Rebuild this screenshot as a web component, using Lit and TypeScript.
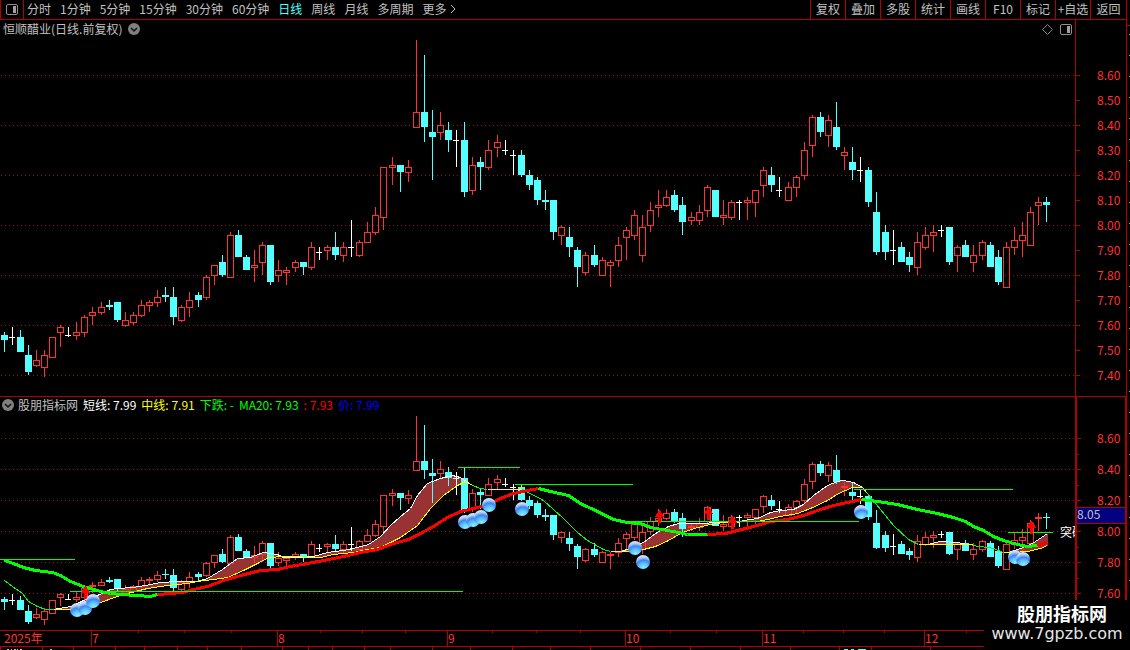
import { LitElement, html, svg, css } from "lit";
import { customElement, state } from "lit/decorators.js";
import { classMap } from "lit/directives/class-map.js";

type Kind = "r" | "c" | "w";
type Candle = { kind: Kind; high: number; top: number; bottom: number; low: number };

/* One candle per entry: kind, high, body top, body bottom, low (in cents). */
const CANDLES: Candle[] = `
c 757 756 754 749|w 759 755 755 752|c 758 755 749 749|c 752 748 741 740|r 750 746 744 743|r 750 748 743 739
r 755 755 747 747|r 760 759 757 751|w 759 756 756 755|r 761 757 756 754|r 764 763 757 755|r 767 765 764 760
r 769 767 765 764|c 770 768 767 766|c 769 769 762 761|r 765 762 760 759|r 765 764 761 760|r 770 768 764 763
r 770 769 768 765|r 774 771 769 767|c 775 772 771 769|c 775 771 763 760|r 768 767 762 761|r 773 770 767 763
c 773 772 770 767|r 780 779 771 770|r 784 784 780 776|c 788 785 780 779|r 797 796 779 779|c 798 796 787 787
c 788 787 782 782|r 790 784 783 777|r 793 792 785 780|c 792 792 777 776|r 786 782 780 777|r 783 782 781 776
r 786 785 783 781|c 785 785 783 780|r 793 791 783 782|w 791 789 789 786|r 792 791 790 786|c 797 791 788 786
r 793 791 788 785|w 802 791 791 787|r 794 793 788 787|r 801 797 793 793|r 807 804 797 796|r 823 823 803 798
r 827 824 823 816|c 824 824 821 813|r 826 823 821 817|r 874 845 839 839|c 868 845 839 833|c 846 837 835 818
r 845 840 837 834|c 841 838 834 829|w 838 834 834 823|c 841 834 813 811|r 827 824 814 812|c 827 825 823 814
r 834 830 823 822|r 836 833 831 827|w 834 830 830 828|w 830 828 828 820|c 830 828 820 819|c 822 820 816 814
c 819 818 810 808|c 814 810 809 806|c 810 810 797 794|r 800 799 796 792|c 799 795 791 787|c 791 790 783 775
r 789 788 781 780|c 792 788 784 783|r 787 786 780 780|r 786 785 784 775|r 795 792 786 783|r 799 798 795 786
r 806 804 796 794|r 804 799 788 785|r 809 806 800 797|r 814 808 807 803|r 814 811 808 807|c 814 812 806 805
c 811 808 801 796|r 805 803 802 800|r 808 805 802 800|r 816 815 806 803|c 814 814 803 803|r 810 804 803 800
r 810 809 803 802|w 810 809 809 802|r 811 810 809 802|r 814 814 809 803|r 823 822 816 811|c 823 820 816 813
w 819 814 814 811|r 817 815 810 810|r 820 819 815 811|r 833 830 820 818|r 844 843 832 827|c 845 843 837 835
r 844 842 836 831|c 849 839 831 830|r 831 829 828 822|c 831 825 822 818|w 827 822 822 817|c 823 822 809 807
c 813 805 789 788|c 800 797 789 786|w 798 790 790 784|c 793 791 785 785|c 789 787 784 781|r 797 793 783 780
r 799 796 791 790|r 800 797 796 789|w 800 798 798 795|c 799 799 785 784|r 792 791 788 781|c 794 792 787 787
r 792 788 785 781|r 794 793 788 786|c 793 792 783 783|c 790 787 777 776|r 793 791 775 775|r 799 794 791 788
r 801 796 794 787|r 807 805 792 792|r 811 809 808 800|c 811 809 808 801`
  .trim()
  .split(/[|\n]/)
  .map((row) => {
    const [kind, ...v] = row.trim().split(" ");
    const [high, top, bottom, low] = v.map(Number);
    return { kind: kind as Kind, high, top, bottom, low };
  });

/* Study lines are stored in plot units, where the plot is BASE wide. */
const BASE = 1075;

const TREND = [
  { tone: "up", pts: "4,560 13,563 23,567 35,570 52,572 60,575 70,581 83,586 100,591 110,593 120,594 137,595 150,596 157,594" },
  { tone: "down", pts: "157,594 182,592 193,589 207,586 223,580 240,575 260,570 277,569 290,566 307,563 323,560 343,556 360,552 377,549 393,543 408,539 420,533 433,526 447,517 460,511 477,507 487,504 500,498 513,493 527,490 538,488" },
  { tone: "up", pts: "538,488 550,491 568,495 580,503 597,511 613,519 627,522 640,523 650,527 667,530 678,532 687,534 707,534" },
  { tone: "down", pts: "707,534 725,533 737,530 753,526 770,521 787,519 803,515 817,510 833,505 847,502 861,499" },
  { tone: "up", pts: "861,499 877,501 897,504 917,509 937,513 953,517 965,521 973,526 983,530 993,536 1003,540 1017,544 1027,546 1037,545" },
  { tone: "down", pts: "1037,545 1047,542" },
];

const BANDS = [
  {
    short: "53,609 70,606 77,603 83,600 97,595 110,589 117,588 133,587 150,584 160,582 177,581 197,581 207,578 222,569 237,558 250,557 263,552 277,554 283,557 300,557 313,556 327,552 343,550 357,547 368,544 380,536 390,525 400,516 410,508 417,495 427,483 440,478 452,475 460,477 472,485",
    mid: "53,609 70,609 80,606 100,602 117,596 127,593 147,588 167,585 187,583 197,581 213,579 227,577 243,570 257,563 268,557 283,556 320,557 333,554 353,552 367,549 380,547 390,542 400,537 417,525 430,508 443,495 457,485 465,481 472,485",
  },
  {
    short: "620,551 630,548 643,542 655,533 668,526 678,523 700,523 717,522 737,522 743,520 757,518 770,512 780,510 793,509 803,504 813,495 827,485 837,481 843,480 853,482 862,487 867,493",
    mid: "610,551 627,551 643,549 655,546 668,540 682,532 697,527 710,524 723,522 757,521 767,519 780,516 797,513 810,508 827,500 838,493 852,487 862,487 867,493",
  },
  { short: "927,544 940,541 957,542 967,544", mid: "918,544 972,544" },
  { short: "1008,552 1020,548 1032,543 1047,533", mid: "1003,552 1012,552 1027,551 1040,548 1047,545" },
];

const FALLING = [
  "4,580 12,586 22,593 28,601 37,606 45,609 53,609",
  "472,485 480,488 487,489",
  "522,489 543,500 553,509 563,518 577,532 587,540 603,549 610,551",
  "867,493 880,509 893,525 908,539 918,544",
  "972,545 987,547 993,548 1003,552",
];

const LEVELS = [
  [0, 75, 559], [70, 463, 591], [458, 520, 467], [515, 633, 484],
  [622, 859, 521], [854, 1013, 489], [1008, 1053, 532],
];

const BALLS = [
  [77, 610], [85, 608], [93, 601], [465, 522], [473, 520], [481, 517], [489, 505],
  [522, 509], [635, 548], [643, 562], [861, 512], [1015, 557], [1023, 559],
];

const ARROWS = [[85, 587], [659, 511], [708, 508], [732, 517], [1031, 522]];

const PERIODS = ["分时", "1分钟", "5分钟", "15分钟", "30分钟", "60分钟", "日线", "周线", "月线", "多周期"];
const TOOLS = ["复权", "叠加", "多股", "统计", "画线", "F10", "标记", "+自选", "返回"];

const MONTHS: [number, string][] = [[91, "7"], [277, "8"], [447, "9"], [625, "10"], [762, "11"], [924, "12"]];
const WEEKS = [138, 184, 231, 320, 362, 405, 492, 536, 580, 670, 716, 803, 843, 884, 966];
const TABS = [0, 42, 73, 115, 144, 177, 207, 241, 282, 308, 332, 364, 390, 432, 470, 512, 550, 590, 640, 690, 740, 790, 839, 871, 930];

const priceY = (cents: number) => Math.floor(75 + (860 - cents) * 2.5);
const studyY = (cents: number) => Math.floor(438 + (860 - cents) * 1.55);

@customElement("app-root")
export class AppRoot extends LitElement {
  @state() private plotWidth = Math.max(300, window.innerWidth - 55);
  @state() private period = "日线";
  private observer?: ResizeObserver;

  static styles = css`
    :host {
      display: block;
      background: #000;
      color: #c0c0c0;
      font: 12px/16px "Noto Sans CJK SC", "Liberation Sans", sans-serif;
    }
    .app {
      position: relative;
      display: flex;
      min-height: 100vh;
      overflow: hidden;
    }
    .main { flex: 1; min-width: 0; display: flex; flex-direction: column; }
    .edge {
      flex: none;
      width: 3px;
      border-left: 1px solid #b00000;
      display: flex;
      flex-direction: column;
      align-items: flex-end;
    }
    .edge-top { width: 3px; height: 25px; border-bottom: 1px solid #b00000; }
    .edge-ticks {
      flex: 1;
      width: 1px;
      background: repeating-linear-gradient(#000 0 8px, #b0b0b0 8px 9px, #000 9px 21px);
    }
    button {
      appearance: none;
      background: none;
      border: 0;
      margin: 0;
      padding: 0;
      color: inherit;
      font: inherit;
      white-space: nowrap;
      cursor: pointer;
    }
    svg { display: block; }
    .bar {
      display: flex;
      justify-content: space-between;
      height: 19px;
      border-bottom: 1px solid #b00000;
    }
    .periods { display: flex; align-items: center; gap: 9px; }
    .period { padding-bottom: 2px; }
    .dock {
      width: 24px;
      height: 19px;
      box-sizing: border-box;
      border: solid #b00000;
      border-width: 0 1px;
      margin-right: -6px;
      display: grid;
      place-items: center;
    }
    .active { color: #54ffff; }
    .more { display: flex; align-items: center; gap: 4px; padding-bottom: 2px; }
    .tools { display: flex; }
    .tool {
      width: 35px;
      box-sizing: border-box;
      border-left: 1px solid #b00000;
      padding-bottom: 2px;
      text-align: center;
    }
    .tool:last-child { width: 36px; }
    .pane { display: grid; grid-template-columns: minmax(0, 1fr) 51px; }
    .price { border-bottom: 1px solid #b00000; }
    .title {
      display: flex;
      align-items: center;
      gap: 6px;
      height: 18px;
      padding: 0 3px;
    }
    .title-end { margin-left: auto; display: flex; gap: 7px; }
    .legend {
      display: flex;
      align-items: center;
      gap: 5px;
      height: 17px;
      box-sizing: border-box;
      padding: 0 2px 2px;
    }
    .name { display: flex; align-items: center; gap: 4px; }
    .plot { overflow: hidden; }
    .white { color: #fff; }
    .yellow { color: #ff0; }
    .green { color: #0f0; }
    .red { color: #f00; }
    .blue { color: #00f; }
    .crisp { shape-rendering: crispEdges; }
    .grid { stroke: #901818; stroke-dasharray: 1 3; }
    .rule { fill: #b00000; }
    .fill-r { fill: #ff3232; }
    .fill-c { fill: #54ffff; }
    .fill-w { fill: #fff; }
    .hollow { fill: none; stroke: #ff3232; }
    .band { fill: #993232; }
    .line { fill: none; stroke-width: 1; }
    .short { stroke: #fff; }
    .mid { stroke: #ff0; }
    .fall { stroke: #0f0; }
    .thick { fill: none; stroke-width: 3; stroke-linejoin: round; }
    .up { stroke: #0f0; }
    .down { stroke: #f00; }
    .level { fill: #0f0; }
    .arrow { fill: #f00; }
    .tick-text { fill: #ff3232; }
    .note { fill: #fff; }
    .mark { fill: #000080; }
    .mark-text { fill: #c0c0c0; }
    .watermark {
      position: absolute;
      right: 0;
      bottom: 0;
      width: 146px;
      height: 50px;
      box-sizing: border-box;
      padding-top: 2px;
      background: #000;
      text-align: center;
      color: #fff;
    }
    .mark-name { font-size: 18px; line-height: 23px; font-weight: 700; padding-left: 10px; }
    .mark-url {
      display: block;
      color: #e6e6e6;
      font: 16px/18px "DejaVu Sans", sans-serif;
      text-decoration: none;
    }
  `;

  firstUpdated() {
    const plot = this.renderRoot.querySelector(".plot")!;
    this.observer = new ResizeObserver(([entry]) => {
      const w = Math.round(entry.contentRect.width);
      if (w > 0 && w !== this.plotWidth) this.plotWidth = w;
    });
    this.observer.observe(plot);
  }

  disconnectedCallback() {
    super.disconnectedCallback();
    this.observer?.disconnect();
  }

  private sx(x: number) {
    return Math.round((x * this.plotWidth) / BASE);
  }

  private points(list: string) {
    return list
      .split(" ")
      .map((p) => {
        const [x, y] = p.split(",").map(Number);
        return `${this.sx(x) + 0.5},${y + 0.5}`;
      });
  }

  private candles(y: (c: number) => number) {
    const pitch = (this.plotWidth - 24.31) / 130;
    return CANDLES.map((d, i) => {
      const x = Math.floor(4.06 + pitch * i);
      const [h, t, b, l] = [y(d.high), y(d.top), y(d.bottom), y(d.low)];
      const fill = `fill-${d.kind}`;
      if (d.kind === "w") {
        return svg`<rect class=${fill} x=${x} y=${h} width="1" height=${l - h}></rect>
          <rect class=${fill} x=${x - 3} y=${t} width="6" height="1"></rect>`;
      }
      if (d.kind === "c") {
        return svg`<rect class=${fill} x=${x} y=${h} width="1" height=${l - h}></rect>
          <rect class=${fill} x=${x - 3} y=${t} width="7" height=${Math.max(1, b - t)}></rect>`;
      }
      return svg`<rect class=${fill} x=${x} y=${h} width="1" height=${t - h}></rect>
        <rect class=${fill} x=${x} y=${b} width="1" height=${Math.max(0, l - b)}></rect>
        <rect class="hollow" x=${x - 2.5} y=${t + 0.5} width="6" height=${b - t}></rect>`;
    });
  }

  private grid(first: number, step: number, count: number) {
    return Array.from({ length: count }, (_, i) => {
      const y = first + step * i + 0.5;
      return svg`<line class="grid" x1="1" x2=${this.plotWidth} y1=${y} y2=${y}></line>`;
    });
  }

  private chevron() {
    return html`<svg width="12" height="12" viewBox="0 0 12 12" aria-hidden="true">
      <circle cx="6" cy="6" r="6" fill="#808080"></circle>
      <path d="M3 5l3 3 3-3" fill="none" stroke="#101010" stroke-width="1.5"></path>
    </svg>`;
  }

  private dockIcon() {
    return html`<svg width="12" height="11" viewBox="0 0 12 11" aria-hidden="true">
      <rect x="0.5" y="0.5" width="11" height="10" rx="1.5" fill="none" stroke="#909090"></rect>
      <rect x="7" y="2" width="3" height="7" fill="#a0a0a0"></rect>
    </svg>`;
  }

  private renderBar() {
    return html`<header class="bar">
      <nav class="periods">
        <button class="dock" aria-label="dock">${this.dockIcon()}</button>
        ${PERIODS.map(
          (p) => html`<button
            class=${classMap({ period: true, active: p === this.period })}
            @click=${() => (this.period = p)}
          >${p}</button>`,
        )}
        <button class="more">更多
          <svg width="6" height="10" viewBox="0 0 6 10" aria-hidden="true">
            <path d="M1 1l4 4-4 4" fill="none" stroke="#c0c0c0"></path>
          </svg>
        </button>
      </nav>
      <div class="tools">${TOOLS.map((t) => html`<button class="tool">${t}</button>`)}</div>
    </header>`;
  }

  private renderPrice() {
    const w = this.plotWidth;
    return html`<section class="pane price">
      <div>
        <div class="title">
          <span>恒顺醋业(日线.前复权)</span>
          <button aria-label="menu">${this.chevron()}</button>
          <div class="title-end">
            <button aria-label="marker"><svg width="11" height="11" viewBox="0 0 11 11">
              <path d="M5.5 0.5l5 5-5 5-5-5z" fill="none" stroke="#808080"></path>
            </svg></button>
            <button aria-label="side panel">${this.dockIcon()}</button>
          </div>
        </div>
        <div class="plot">
          <svg class="crisp" width=${w} height="358" viewBox="0 38 ${w} 358">
            ${this.grid(75, 50, 7)} ${this.candles(priceY)}
          </svg>
        </div>
      </div>
      <svg class="crisp" width="51" height="376" viewBox="0 20 51 376">
        <rect class="rule" x="0" y="20" width="1" height="376"></rect>
        ${Array.from({ length: 13 }, (_, i) => svg`
          <rect class="rule" x="1" y=${75 + 25 * i} width="4" height="1"></rect>
          <text class="tick-text" x="22" y=${80 + 25 * i}>${(8.6 - i / 10).toFixed(2)}</text>`)}
      </svg>
    </section>`;
  }

  private renderStudy() {
    const w = this.plotWidth;
    return html`<section class="pane">
      <div>
        <div class="legend">
          <span class="name"><button aria-label="indicator menu">${this.chevron()}</button>股朋指标网</span>
          <span class="white">短线: 7.99</span>
          <span class="yellow">中线: 7.91</span>
          <span class="green">下跌: -</span>
          <span class="green">MA20: 7.93</span>
          <span class="red">: 7.93</span>
          <span class="blue">价: 7.99</span>
        </div>
        <div class="plot">
          <svg width=${w} height="216" viewBox="0 414 ${w} 216">
            <defs>
              <radialGradient id="ball" cx="0.55" cy="0.95" r="0.95">
                <stop offset="0" stop-color="#8ff4ff"></stop>
                <stop offset="0.35" stop-color="#62c4ff"></stop>
                <stop offset="0.62" stop-color="#3c86f0"></stop>
                <stop offset="0.8" stop-color="#a8c8f8"></stop>
                <stop offset="1" stop-color="#e8f0ff"></stop>
              </radialGradient>
            </defs>
            <g class="crisp">
              ${this.grid(438, 31, 6)}
              ${BANDS.map((b) => svg`<polygon class="band"
                points=${[...this.points(b.short), ...this.points(b.mid).reverse()].join(" ")}></polygon>`)}
              ${this.candles(studyY)}
              ${BANDS.map((b) => svg`
                <polyline class="line short" points=${this.points(b.short).join(" ")}></polyline>
                <polyline class="line mid" points=${this.points(b.mid).join(" ")}></polyline>`)}
              <polyline class="line mid" points=${this.points("487,489 522,489").join(" ")}></polyline>
              ${FALLING.map((f) => svg`<polyline class="line fall" points=${this.points(f).join(" ")}></polyline>`)}
              ${TREND.map((t) => svg`<polyline class="thick ${t.tone}" points=${this.points(t.pts).join(" ")}></polyline>`)}
              ${LEVELS.map(([a, b, y]) => svg`<rect class="level" x=${this.sx(a)} y=${y}
                width=${this.sx(b) - this.sx(a)} height="1"></rect>`)}
              ${ARROWS.map(([x, y]) => svg`<path class="arrow"
                d="M${this.sx(x) + 0.5} ${y - 1}l5 7h-3.5v6h-3v-6h-3.5z"></path>`)}
            </g>
            ${BALLS.map(([x, y]) => svg`<circle cx=${this.sx(x)} cy=${y} r="7" fill="url(#ball)"></circle>`)}
            <text class="note" x=${w - 15} y="537">突破</text>
          </svg>
        </div>
      </div>
      <svg class="crisp" width="51" height="233" viewBox="0 397 51 233">
        <rect class="rule" x="0" y="397" width="2" height="233"></rect>
        <rect class="rule" x="50" y="397" width="1" height="233"></rect>
        ${Array.from({ length: 6 }, (_, i) => svg`
          <rect class="rule" x="2" y=${438 + 31 * i} width="4" height="1"></rect>
          <rect class="rule" x="2" y=${454 + 31 * i} width="2" height="1"></rect>
          <text class="tick-text" x="22" y=${443 + 31 * i}>${(8.6 - i / 5).toFixed(2)}</text>`)}
        <rect class="rule" x="2" y="507" width="48" height="17"></rect>
        <rect class="mark" x="2" y="508" width="48" height="15"></rect>
        <text class="mark-text" x="2" y="519">8.05</text>
      </svg>
    </section>`;
  }

  private renderTime() {
    const full = this.plotWidth + 51;
    return html`<footer>
      <svg class="crisp" width=${full} height="20" viewBox="0 630 ${full} 20">
        <rect class="rule" x="0" y="630" width=${full} height="1"></rect>
        <rect class="rule" x="0" y="646" width=${full} height="1"></rect>
        <text class="tick-text" x="4" y="643">2025年</text>
        ${MONTHS.map(([x, label]) => svg`
          <rect class="rule" x=${this.sx(x)} y="631" width="1" height="15"></rect>
          <text class="tick-text" x=${this.sx(x) + 1} y="643">${label}</text>`)}
        ${WEEKS.map((x) => svg`<rect class="rule" x=${this.sx(x)} y="631" width="1" height="2"></rect>`)}
        ${TABS.map((x) => svg`<rect class="rule" x=${this.sx(x)} y="647" width="1" height="3"></rect>`)}
        <path d="M7 649.5h2m2 0h1m2 0h2m1 0h1m2 0h2m28 0h2" stroke="#c0c0c0"></path>
        <path d="M${this.sx(844)} 649.5h4m3 0h3m4 0h8" stroke="#54ffff"></path>
      </svg>
    </footer>`;
  }

  render() {
    return html`<div class="app">
      <main class="main">
        ${this.renderBar()} ${this.renderPrice()} ${this.renderStudy()} ${this.renderTime()}
      </main>
      <div class="edge"><div class="edge-top"></div><div class="edge-ticks"></div></div>
      <div class="watermark">
        <div class="mark-name">股朋指标网</div>
        <a class="mark-url" href="#">www.7gpzb.com</a>
      </div>
    </div>`;
  }
}
